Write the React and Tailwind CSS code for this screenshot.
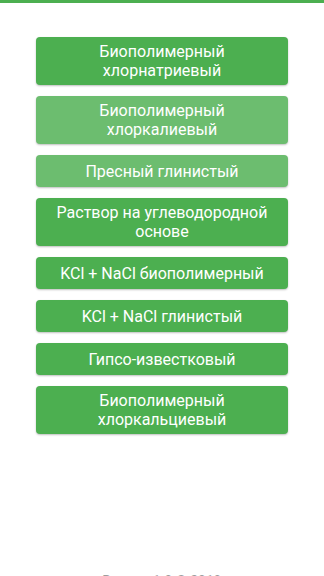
const items = [
  { label: "Биополимерный хлорнатриевый", light: false },
  { label: "Биополимерный хлоркалиевый", light: true },
  { label: "Пресный глинистый", light: true },
  { label: "Раствор на углеводородной основе", light: false },
  { label: "KCl + NaCl биополимерный", light: false },
  { label: "KCl + NaCl глинистый", light: false },
  { label: "Гипсо-известковый", light: false },
  { label: "Биополимерный хлоркальциевый", light: false },
];

export default function App() {
  return (
    <div className="w-[324px] h-[576px] overflow-hidden bg-white flex flex-col font-['Roboto',sans-serif]">
      {/* top bar */}
      <div className="h-[3px] bg-[#4caf50]" />

      <div className="flex flex-col gap-[11px] px-[36px] pt-[34px]">
        {items.map((item) => (
          <button
            key={item.label}
            className={
              "min-h-[32px] w-full rounded-[4px] px-[18px] py-[5px] text-[16px] leading-[19px] text-white text-center shadow-[0_1px_2px_rgba(0,0,0,0.25)] " +
              (item.light ? "bg-[#6cbd6f]" : "bg-[#4caf50]")
            }
          >
            {item.label}
          </button>
        ))}
      </div>

      <p className="mt-auto mb-[-13px] text-center text-[14px] leading-[16px] text-[#9e9e9e]">
        Версия 1.0 © 2019
      </p>
    </div>
  );
}
